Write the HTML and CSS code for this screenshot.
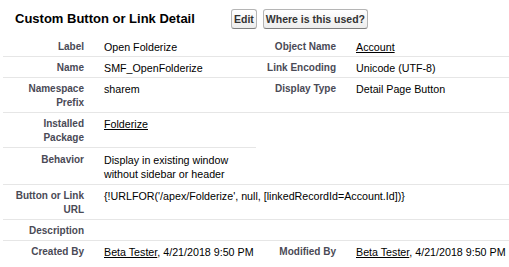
FILE: index.html
```html
<!DOCTYPE html>
<html>
<head>
<meta charset="utf-8">
<link rel="stylesheet" href="styles.css">
</head>
<body>
<div class="block">
  <div class="header">
    <h2 class="title">Custom Button or Link Detail</h2>
    <div class="buttons">
      <button class="btn">Edit</button>
      <button class="btn">Where is this used?</button>
    </div>
  </div>
  <table class="detail">
    <colgroup>
      <col class="c-label"><col class="c-data"><col class="c-label2"><col class="c-data2">
    </colgroup>
    <tr>
      <td class="label">Label</td><td class="data">Open Folderize</td>
      <td class="label">Object Name</td><td class="data"><a href="#">Account</a></td>
    </tr>
    <tr>
      <td class="label">Name</td><td class="data">SMF_OpenFolderize</td>
      <td class="label">Link Encoding</td><td class="data">Unicode (UTF-8)</td>
    </tr>
    <tr>
      <td class="label">Namespace Prefix</td><td class="data">sharem</td>
      <td class="label">Display Type</td><td class="data">Detail Page Button</td>
    </tr>
    <tr>
      <td class="label">Installed Package</td><td class="data"><a href="#">Folderize</a></td>
      <td class="empty"></td><td class="empty"></td>
    </tr>
    <tr class="tall">
      <td class="label">Behavior</td><td class="data">Display in existing window without sidebar or header</td>
      <td class="label"></td><td class="data"></td>
    </tr>
    <tr>
      <td class="label">Button or Link URL</td><td class="data" colspan="3">{!URLFOR('/apex/Folderize', null, [linkedRecordId=Account.Id])}</td>
    </tr>
    <tr>
      <td class="label">Description</td><td class="data" colspan="3"></td>
    </tr>
    <tr class="last">
      <td class="label">Created By</td><td class="data nowrap"><a href="#">Beta Tester</a>, 4/21/2018 9:50 PM</td>
      <td class="label">Modified By</td><td class="data nowrap"><a href="#">Beta Tester</a>, 4/21/2018 9:50 PM</td>
    </tr>
  </table>
</div>
</body>
</html>
```

FILE: styles.css
```css
html, body {
  margin: 0;
  padding: 0;
  background: #fff;
}
body {
  font-family: "Liberation Sans", Arial, sans-serif;
  color: #000;
}
.block {
  padding-left: 3px;
  width: 506px;
}
.header {
  display: flex;
  align-items: center;
  padding-top: 9px;
  height: 20px;
  margin-bottom: 7px;
}
.title {
  margin: 0;
  padding-left: 12px;
  width: 228px;
  flex: none;
  box-sizing: border-box;
  font-size: 13px;
  font-weight: bold;
  line-height: 20px;
  color: #000;
  white-space: nowrap;
}
.buttons {
  display: flex;
  gap: 6px;
}
.btn {
  font-family: "Liberation Sans", Arial, sans-serif;
  font-size: 10.5px;
  font-weight: bold;
  color: #333;
  height: 20px;
  padding: 0 2px;
  margin: 0;
  border: 1px solid #b5b5b5;
  border-bottom-color: #7f7f7f;
  border-radius: 3px;
  background: linear-gradient(#ffffff, #ededed);
  line-height: 18px;
  cursor: pointer;
}
.detail {
  width: 506px;
  border-collapse: collapse;
  table-layout: fixed;
}
.c-label { width: 91px; }
.c-data { width: 162px; }
.c-label2 { width: 90px; }
.c-data2 { width: 163px; }
.detail td {
  padding: 4px 0 2px 0;
  border-bottom: 1px solid #e6e6e6;
  vertical-align: top;
  line-height: 14px;
}
.detail td.label {
  text-align: right;
  padding-right: 10px;
  padding-left: 2px;
  font-size: 10px;
  font-weight: bold;
  color: #4a4a56;
}
.detail td.data {
  padding-left: 10px;
  padding-right: 4px;
  font-size: 10.7px;
  color: #000;
}
.detail td.nowrap {
  white-space: nowrap;
  padding-right: 0;
}
.detail td.empty {
  border-bottom: none;
}
.detail tr.tall td {
  padding-top: 5px;
  padding-bottom: 3px;
}
.detail tr.last td {
  border-bottom: none;
}
.detail a {
  color: #000;
  text-decoration: underline;
}
```
